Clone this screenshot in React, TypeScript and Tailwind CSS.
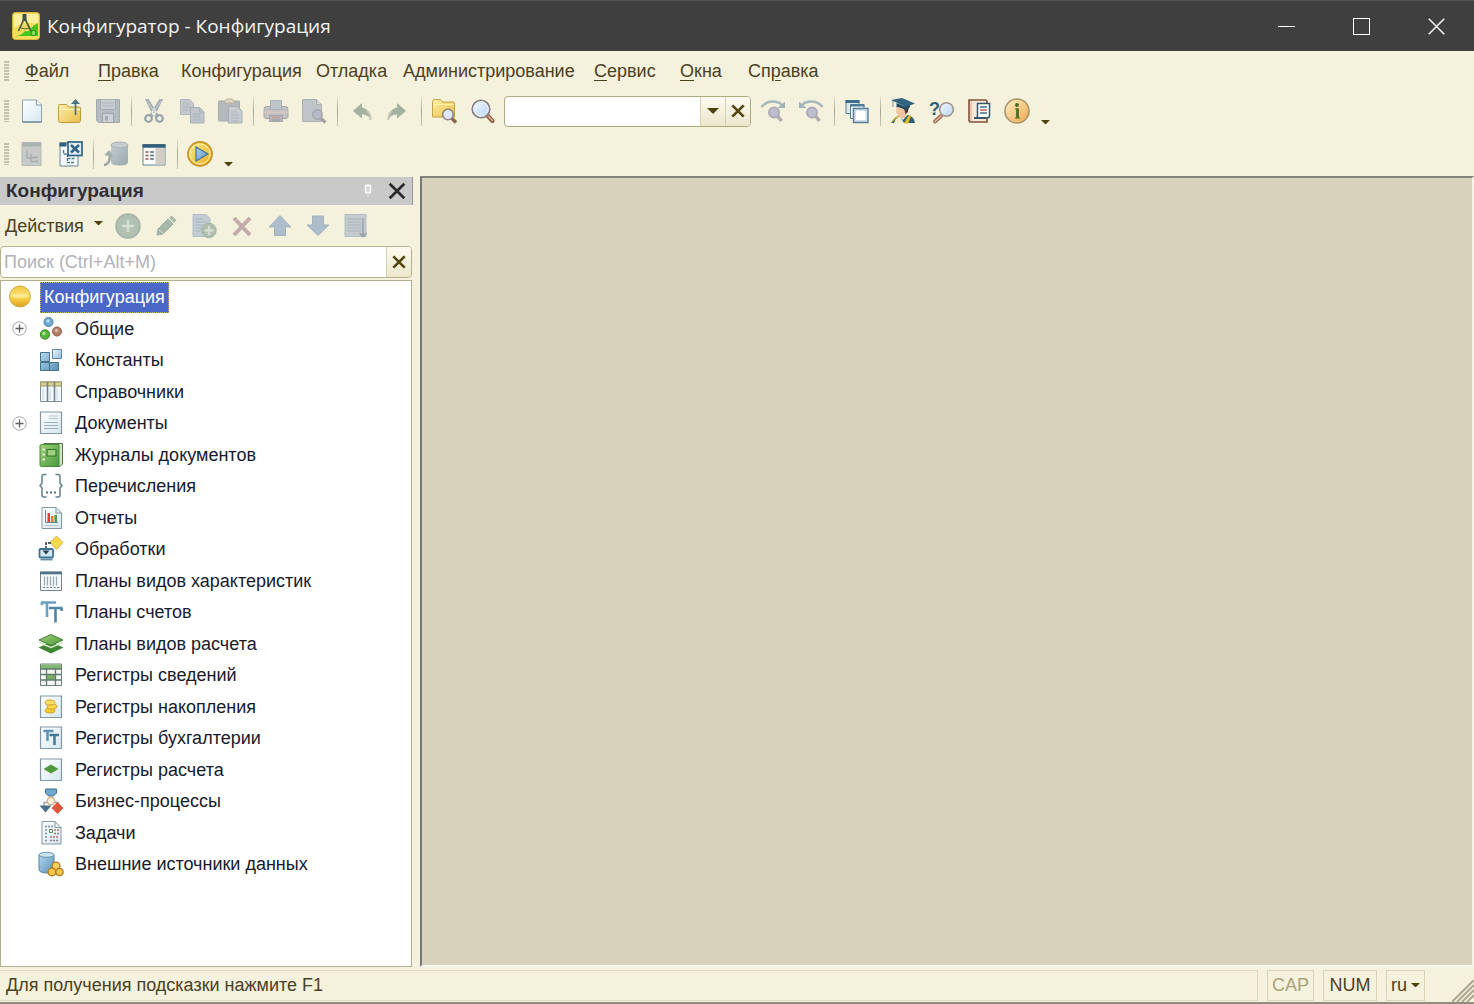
import React from 'react';

type IconProps = { children: React.ReactNode; className?: string };

const Icon = ({ children, className = 'size-[26px]' }: IconProps) => (
  <svg viewBox="0 0 26 26" className={`${className} shrink-0 overflow-visible`} fill="none" aria-hidden="true">
    {children}
  </svg>
);

const ICONS: Record<string, React.ReactNode> = {
  newFile: (
    <>
      <path d="M3.5 2h14l5 5v17h-19z" fill="url(#paper)" stroke="#8fa3ad" />
      <path d="M17.5 2v5h5" fill="#fff" stroke="#7f98a6" />
      <path d="M3.5 24h19" stroke="#6f8d9c" strokeWidth="1.4" />
    </>
  ),
  open: (
    <>
      <path d="M1.5 7.5q0-1 1-1h7l2 2.500h11q1 0 1 1v12.500q0 2-2 2h-18q-2 0-2-2z" fill="url(#folder)" stroke="#c29a3c" />
      <path d="M2 11.500h21" stroke="#fff3b8" />
      <path d="M18.500 17V3" stroke="#4b7080" strokeWidth="1.700" />
      <path d="M14 6l4.500-5L23 6z" fill="#4b7080" />
    </>
  ),
  save: (
    <>
      <path d="M1.500 1.500h23v23h-21l-2-2z" fill="#b5bbc0" stroke="#a0a9ae" />
      <path d="M5.500 1.500h15v10h-15z" fill="#c8cdcf" stroke="#a7adb1" />
      <path d="M7 5h12M7 8h12" stroke="#adb3b7" />
      <path d="M7.500 15.500h11v9h-11z" fill="#cfd2d2" stroke="#9ba3a9" />
      <path d="M10 18h3v4.500h-3z" fill="#a2abb1" />
    </>
  ),
  cut: (
    <>
      <path d="M4 1l3.500 0L17 16l-2 3-3-1.500zM22 1l-3.500 0L9 16l2 3 3-1.500z" fill="#a3aeb5" />
      <path d="M6 3l8 12M20 3l-8 12" stroke="#c0c9cd" strokeWidth="1.200" />
      <circle cx="7.500" cy="20.500" r="3.300" stroke="#98a4ac" strokeWidth="2.200" />
      <circle cx="18.500" cy="20.500" r="3.300" stroke="#98a4ac" strokeWidth="2.200" />
    </>
  ),
  copy: (
    <>
      <path d="M1.500 1.500h9l4 4v11h-13z" fill="#c3c8cc" stroke="#b0b7bc" />
      <path d="M3.500 6h7M3.500 9h8M3.500 12h8" stroke="#adb5ba" />
      <path d="M11.500 9.500h9l4.500 4.500v11H11.500z" fill="#c0c6cb" stroke="#a7b0b7" />
      <path d="M20.500 9.500V14H25M14 16h8M14 19h8M14 22h8" stroke="#a9b2b8" />
    </>
  ),
  paste: (
    <>
      <rect x="1.500" y="3" width="21" height="20" rx="1" fill="#b5b9bb" stroke="#a6abae" />
      <path d="M7.500 5V3l3-2h4l3 2v2z" fill="#ddd8c5" stroke="#b7ae9e" />
      <path d="M11.500 8.500h9l4.500 4.500v12H11.500z" fill="#c6cbd0" stroke="#a6afb6" />
      <path d="M14 14h6M14 17h8M14 20h8M14 23h8" stroke="#aab3b9" />
    </>
  ),
  print: (
    <>
      <path d="M3.500 8.500h19q2.500 0 2.500 3v7q0 2-2 2H3q-2 0-2-2v-7q0-3 2.500-3z" fill="#c3c0c0" stroke="#aaa8aa" />
      <path d="M7.500 2.500h11v9h-11z" fill="#bec6cc" stroke="#a8b1b8" />
      <path d="M1.500 14.500h23" stroke="#d1c9c8" strokeWidth="2" />
      <path d="M6.500 17.500h13v6h-13z" fill="#b9b9bd" stroke="#a4a5aa" />
      <path d="M9 19.500h8" stroke="#c79a96" strokeWidth="1.500" />
      <path d="M8.500 22h9" stroke="#8f949a" />
    </>
  ),
  preview: (
    <>
      <path d="M1.500 1.500h14l5 5v17h-19z" fill="#bfc4c9" stroke="#aab1b6" />
      <path d="M15.500 1.500v5h5" fill="#d3d6d8" stroke="#aab1b6" />
      <path d="M19 19.500l5.500 5" stroke="#a7a29f" strokeWidth="3.200" />
      <circle cx="16.500" cy="16.500" r="4.700" fill="#b5bbc6" stroke="#a2a7ae" strokeWidth="1.500" />
    </>
  ),
  undo: (
    <>
      <path d="M6 13l9-8v4.500q8 1 8.500 12-3-5.500-8.500-5v4z" fill="#a3b29f" />
      <path d="M20 13q4 3 3.500 9" stroke="#c3cabc" strokeWidth="2" />
    </>
  ),
  redo: (
    <>
      <path d="M21 13l-9-8v4.500q-8 1-8.500 12 3-5.500 8.500-5v4z" fill="#a3b29f" />
      <path d="M7 13q-4 3-3.500 9" stroke="#c3cabc" strokeWidth="2" />
    </>
  ),
  findFolder: (
    <>
      <path d="M1.500 3.500l1-2h7l2 2.500h11l1 1v14h-22z" fill="url(#folder)" stroke="#c8a140" />
      <path d="M2 6.500h21" stroke="#fff2b0" />
      <path d="M20 19.500l5 5" stroke="#8b654b" strokeWidth="3.400" />
      <circle cx="17" cy="16.500" r="5.300" fill="#dfe9fa" stroke="#8e8684" strokeWidth="1.600" />
    </>
  ),
  find: (
    <>
      <path d="M18.500 17.500l5 5.500" stroke="#8b5d48" strokeWidth="4.200" strokeLinecap="round" />
      <path d="M19 18l4.500 4.500" stroke="#d9ab86" strokeWidth="1.700" strokeLinecap="round" />
      <circle cx="12" cy="11" r="8.700" fill="url(#lens)" stroke="#877d88" strokeWidth="1.800" />
      <circle cx="12" cy="11" r="7.300" stroke="#f2f6ff" />
    </>
  ),
  findNext: (
    <>
      <path d="M1.500 9Q6 3.500 13 3.500q6 0 9.500 4" stroke="#a8b9bd" strokeWidth="2.600" />
      <path d="M25 3.500V10h-7.500z" fill="#9eb2b9" />
      <path d="M17.500 18l4 5" stroke="#b5acaf" strokeWidth="3.600" />
      <circle cx="14" cy="14.500" r="5" fill="#bfc0cf" stroke="#adabb9" strokeWidth="2" />
    </>
  ),
  findPrev: (
    <>
      <path d="M24.500 9Q20 3.500 13 3.500q-6 0-9.500 4" stroke="#a8b9bd" strokeWidth="2.600" />
      <path d="M1 3.500V10h7.500z" fill="#9eb2b9" />
      <path d="M17.500 18l4 5" stroke="#b5acaf" strokeWidth="3.600" />
      <circle cx="14" cy="14.500" r="5" fill="#bfc0cf" stroke="#adabb9" strokeWidth="2" />
    </>
  ),
  windows: (
    <>
      <path d="M2 2.500h13v13H2z" fill="#dce8ee" stroke="#587e93" />
      <path d="M1.500 3.500h14" stroke="#3f6f88" strokeWidth="3" />
      <path d="M6.500 6.500h13.500v14H6.500z" fill="#eef5fa" stroke="#587e93" />
      <path d="M6 7.500h14.500" stroke="#4a7a93" strokeWidth="2" />
      <path d="M9.500 10.500h14.500v14H9.500z" fill="#cfe1ec" stroke="#587e93" strokeWidth="1.400" />
      <path d="M12 13h9.500v9H12z" fill="#fff" />
    </>
  ),
  student: (
    <>
      <path d="M7 8h10l1 5-3 7H9.500L6 14z" fill="#f3c3a1" />
      <path d="M14 9l5-1-1 6-2.500 2-1-4z" fill="#54352b" />
      <path d="M1 25q3-6 8-7l4 4 4.500-5Q24 18 25 25z" fill="#2d5f75" />
      <path d="M4 25q2-6 6-6.500L14 25z" fill="#f5ecce" />
      <path d="M1 25q4-6 8-7M14.500 25L19 17.500l1.500 .7L18 25z" fill="#e3c32b" stroke="#d2b220" />
      <path d="M1 2L12 0l13 5.500L16 9z" fill="#2e6480" />
      <path d="M6.500 5v4q5 0 9 3.500L20 9V7l-4 2z" fill="#214a60" />
      <path d="M3 3v6" stroke="#7d8d92" />
    </>
  ),
  help: (
    <>
      <text x="1" y="17" fontFamily="Liberation Sans, sans-serif" fontWeight="700" fontSize="18" fill="#2e5f78">?</text>
      <path d="M13 18l-6 5.500" stroke="#9b6c5c" strokeWidth="4" strokeLinecap="round" />
      <path d="M13 18l-6 5.500" stroke="#e0b59a" strokeWidth="1.500" strokeLinecap="round" />
      <circle cx="18.500" cy="11.500" r="6.800" fill="url(#lens)" stroke="#a5938f" strokeWidth="1.600" />
    </>
  ),
  script: (
    <>
      <path d="M3 2h16q2 0 2 2v20H5q-2 0-2-2z" fill="#f9e8d8" stroke="#83503c" strokeWidth="1.600" />
      <path d="M5 3v20" stroke="#d9a98b" />
      <path d="M11.500 5.500h12v12q0 2.500-2.500 2.500H9q3 0 2.500-3z" fill="#fff" stroke="#34576d" strokeWidth="1.500" />
      <path d="M14 9h7M14 15h7" stroke="#426f87" strokeWidth="1.400" />
      <path d="M14 12h7" stroke="#b5563f" strokeWidth="1.400" />
      <path d="M8 20h12" stroke="#34576d" strokeWidth="2" />
    </>
  ),
  info: (
    <>
      <circle cx="13" cy="13" r="12" fill="url(#amber)" stroke="#a9946b" strokeWidth="1.600" />
      <circle cx="13" cy="7" r="2" fill="#4d6a25" />
      <path d="M13.500 10.500v9.500" stroke="#4d6a25" strokeWidth="2.800" />
      <path d="M11 11h3M11 20h5" stroke="#4d6a25" strokeWidth="1" />
    </>
  ),
  treeOff: (
    <>
      <path d="M3 1.500h19v23H3z" fill="#c7c9c8" stroke="#b6b9b9" />
      <path d="M3 3.500h19" stroke="#adb2b3" strokeWidth="4" />
      <path d="M8 10v7h4M12 13v7.500M12 16.500h7M12 20.500h7" stroke="#a6abad" strokeWidth="1.300" />
    </>
  ),
  treeClose: (
    <>
      <path d="M3 2h18v23H3z" fill="#f4f8fa" stroke="#66889a" />
      <path d="M2.500 3.500h7" stroke="#2e5e7c" strokeWidth="4" />
      <path d="M6.500 9v4h4M10.500 13v8.500h7M10.500 17.500h7" stroke="#55798c" strokeWidth="1.400" strokeDasharray="3 1" />
      <rect x="11" y="1" width="14" height="13.500" fill="#e3eef6" stroke="#2f6283" strokeWidth="1.700" />
      <path d="M14 4l8 7.500M22 4l-8 7.500" stroke="#2f6283" strokeWidth="2.600" />
    </>
  ),
  database: (
    <>
      <path d="M8 4v17q0 3.500 8.500 3.500T25 21V4z" fill="url(#cylOff)" />
      <ellipse cx="16.500" cy="4" rx="8.500" ry="3" fill="#c5cdd0" stroke="#a7b1b6" />
      <path d="M1 24q7-1 5.500-12" stroke="#9ba6a5" strokeWidth="2.400" />
      <path d="M1 14l5.500-5 4 7z" fill="#a4afad" />
    </>
  ),
  props: (
    <>
      <path d="M2 3.500h22v20.500H2z" fill="#fafafa" stroke="#6a8492" />
      <path d="M1.500 5h23" stroke="#315f7a" strokeWidth="3.500" />
      <path d="M14.500 7h9v16.500h-9z" fill="#d2cdc2" />
      <path d="M4.500 11h3M4.500 14.500h3M4.500 18h3" stroke="#a4544a" strokeWidth="1.300" />
      <path d="M9 11h4M9 14.500h4M9 18h4" stroke="#61727c" strokeWidth="1.300" />
    </>
  ),
  run: (
    <>
      <circle cx="13" cy="13" r="12" fill="url(#gold)" stroke="#c9962a" strokeWidth="1.800" />
      <circle cx="13" cy="13" r="10" stroke="#fdf0a8" />
      <path d="M9 6l12 7-12 7z" fill="url(#blue)" stroke="#3f719f" strokeWidth="1.200" />
    </>
  ),
  add: (
    <>
      <circle cx="13" cy="13" r="12" fill="#b1c0b0" stroke="#a2b3a3" strokeWidth="1.500" />
      <path d="M13 7v12M7 13h12" stroke="#d7dfd2" strokeWidth="2.600" />
    </>
  ),
  edit: (
    <>
      <path d="M4 22l1-6L15 6l5 5L10 21z" fill="#a7b8a8" stroke="#9bad9d" />
      <path d="M16 5l2.500-2.500 5 4.500-2.500 3z" fill="#a9baa9" />
      <path d="M6 17l4.500 3.500" stroke="#d5ddcf" />
    </>
  ),
  addCopy: (
    <>
      <path d="M2 1.500h13l4 4v18H2z" fill="#c2ccd2" stroke="#b1bec6" />
      <path d="M4 6h9M4 9h12M4 12h12M4 15h8M4 18h6" stroke="#aab9c2" />
      <circle cx="18" cy="17.500" r="7.200" fill="#aebfae" stroke="#a0b2a0" />
      <path d="M18 13v9M13.500 17.500h9" stroke="#d5ddcf" strokeWidth="2.400" />
    </>
  ),
  remove: <path d="M5 5l16 17M21 5L5 22" stroke="#c4aaa9" strokeWidth="4" />,
  up: <path d="M13 2.500L24 14h-5.500v8.500h-11V14H2z" fill="#aebdca" stroke="#a2b2bf" />,
  down: <path d="M13 22.500L2 12h5.500V3h11v9H24z" fill="#aebdca" stroke="#a2b2bf" />,
  sort: (
    <>
      <path d="M2 1.500h21v22H2z" fill="#c5cbcf" stroke="#b4bcc2" />
      <path d="M4 6h14M4 9h14M4 12h14M4 15h14M4 18h14" stroke="#a9b3bc" />
      <path d="M20 5v18M16.500 20l3.500 3.500 3.500-3.500" stroke="#95a2ae" strokeWidth="1.600" />
    </>
  ),
  // tree icons
  common: (
    <>
      <circle cx="10.500" cy="6" r="4.500" fill="#6fa9d6" stroke="#4e7ea6" />
      <circle cx="7" cy="18.500" r="4.700" fill="#58b53c" stroke="#3c8a29" />
      <circle cx="19" cy="15.500" r="4.500" fill="#b37f68" stroke="#8a5c48" />
      <circle cx="10" cy="5" r="1.700" fill="#bcdcf2" />
      <circle cx="6" cy="17.500" r="1.700" fill="#b0e795" />
      <circle cx="18.500" cy="14.500" r="1.700" fill="#ddb9a7" />
    </>
  ),
  constants: (
    <>
      <path d="M2.500 5.500h9v9h-9zM2.500 15.500h9v8h-9zM11.500 15.500h9v8h-9z" fill="url(#blue)" stroke="#44708c" />
      <path d="M14.500 2.500h9v9h-9z" fill="url(#sky)" stroke="#5a86a1" />
    </>
  ),
  catalogs: (
    <>
      <path d="M2.500 3h21v19.500h-21z" fill="#f4f8fb" stroke="#7d8f98" />
      <path d="M2.500 3h21v4h-21z" fill="#d9d08b" stroke="#9b9668" />
      <path d="M9.500 3v19.500M16.500 3v19.500" stroke="#71838e" strokeWidth="1.600" />
      <path d="M5 9v12M12 9v12M19 9v12" stroke="#dbe8f0" strokeWidth="2" />
    </>
  ),
  documents: (
    <>
      <path d="M2.500 2h21v21.500h-21z" fill="url(#paper)" stroke="#8597a0" strokeWidth="1.200" />
      <path d="M11 6h9M11 8.500h9" stroke="#b5c3cb" />
      <path d="M6 12.500h14M6 15.500h14M6 18.500h14" stroke="#98afbc" />
    </>
  ),
  journals: (
    <>
      <path d="M6 1.500h18.500v20.500l-2.500 2.500H6z" fill="#cfe3c6" stroke="#4c7b43" />
      <path d="M2 4q0-1.500 1.500-1.500h17.500v22H3.500Q2 24.500 2 23z" fill="url(#green)" stroke="#4b8a3c" />
      <path d="M9 7.500h9v6.500H9z" fill="#9fd07e" stroke="#2f7a29" strokeWidth="1.200" />
      <path d="M4.500 7.500h2.500M4.500 12.500h2.500M4.500 17.500h2.500" stroke="#e3f5d9" strokeWidth="2" />
    </>
  ),
  enums: (
    <>
      <path d="M8.500 1.500H6q-2 0-2 2v6.500L2 12.500l2 2.500v7q0 2 2 2h2.500M17.500 1.500H20q2 0 2 2v6.500l2 2.500-2 2.500v7q0 2-2 2h-2.500" stroke="#64808f" strokeWidth="1.500" />
      <path d="M8 19.500h2M12 19.500h2M16 19.500h2" stroke="#54717f" strokeWidth="2" />
    </>
  ),
  reports: (
    <>
      <path d="M4 2.500h14l5.500 5.500v15.500H4z" fill="url(#paper)" stroke="#8497a1" />
      <path d="M18 2.500V8h5.500" stroke="#8497a1" />
      <path d="M7.500 5v12.500H20" stroke="#71838c" />
      <path d="M9.500 8h2.500v9h-2.500z" fill="#d7433c" />
      <path d="M13 11h2.500v6H13z" fill="#e27a35" />
      <path d="M16.500 10h2.500v7h-2.500z" fill="#4b9b43" />
      <path d="M6.500 20.500h14" stroke="#b9c9d2" />
    </>
  ),
  processing: (
    <>
      <path d="M18.500 0L25 6.500l-6.500 7-6.500-7z" fill="#f4d94d" stroke="#cdb45c" />
      <path d="M13 7H8v6" stroke="#26343c" strokeWidth="1.500" strokeDasharray="3 1" />
      <rect x="1.500" y="13" width="13.500" height="8.500" rx="1" fill="#d5e7f2" stroke="#3f7291" strokeWidth="1.800" />
      <path d="M4.500 14.500h7L8 18.500z" fill="#223e50" />
      <path d="M2.500 23.500h12" stroke="#5f8ca7" strokeWidth="1.800" />
    </>
  ),
  charTypes: (
    <>
      <path d="M2.500 4h21v18.500h-21z" fill="#f5f8fa" stroke="#73848e" />
      <path d="M2 5h22" stroke="#4d7389" strokeWidth="2.600" />
      <path d="M6.500 8.500v9M9.500 8.500v9M12.500 8.500v9M15.500 8.500v9M18.500 8.500v9" stroke="#9aa8b0" strokeWidth="1.200" />
      <path d="M5 19.500h16" stroke="#617681" strokeDasharray="2 1.500" />
    </>
  ),
  accounts: (
    <>
      <path d="M3 3.500h15M9 3.500v14.500M4 3v3" stroke="#6aa0c4" strokeWidth="2.600" />
      <path d="M11 9h13.500M17.500 9v14.500M23.500 9v3" stroke="#4f84a6" strokeWidth="2.600" />
    </>
  ),
  calcTypes: (
    <>
      <path d="M13 11l12.500 5.500L13 22.500.5 16.500z" fill="#3f8534" />
      <path d="M1 11.500l12 5 12-5" stroke="#d7eec4" strokeWidth="1.500" />
      <path d="M13 3.500L25 9l-12 5.500L1 9z" fill="url(#green)" stroke="#3f7f31" />
    </>
  ),
  infoReg: (
    <>
      <path d="M2.500 2h21v21.500h-21z" fill="#f4f7f6" stroke="#6d8177" />
      <path d="M3 2.500h20v4.500H3z" fill="#84b674" />
      <path d="M9 12.500h8.500v5.500H9z" fill="#77b163" />
      <path d="M8.500 6v17.500M17.500 6v17.500M2.500 7h21M2.500 12.500h21M2.500 18h21" stroke="#62796f" strokeWidth="1.300" />
    </>
  ),
  accumReg: (
    <>
      <path d="M2.500 2h21v21.500h-21z" fill="url(#paper)" stroke="#8297a4" strokeWidth="1.200" />
      <ellipse cx="12" cy="16.500" rx="5" ry="2.500" fill="#f5c933" stroke="#d3a22c" />
      <ellipse cx="14" cy="12.500" rx="5" ry="2.500" fill="#f9d64b" stroke="#d3a22c" />
      <ellipse cx="12" cy="8.500" rx="5" ry="2.500" fill="#fbdf63" stroke="#d3a22c" />
    </>
  ),
  accountReg: (
    <>
      <path d="M2.500 2h21v21.500h-21z" fill="url(#paper)" stroke="#8297a4" strokeWidth="1.200" />
      <path d="M5.500 6h10M9.500 6v10" stroke="#5b92b5" strokeWidth="2.500" />
      <path d="M11.500 10h9.500M16.500 10v10" stroke="#457898" strokeWidth="2.500" />
    </>
  ),
  calcReg: (
    <>
      <path d="M2.500 2h21v21.500h-21z" fill="url(#paper)" stroke="#8297a4" strokeWidth="1.200" />
      <path d="M13 7.500l7.500 4.500-7.500 4.500L5.500 12z" fill="#4f9a3b" />
    </>
  ),
  business: (
    <>
      <path d="M7.500 1h11v4l-3 3h-5l-3-3z" fill="#6ea7cf" stroke="#3f708f" />
      <circle cx="13" cy="13" r="3.700" fill="#fff2db" stroke="#d6b18b" strokeWidth="1.500" />
      <path d="M6 18v-3.500h3M17 14.500h3v3" stroke="#93aab5" strokeWidth="1.500" />
      <path d="M1.500 17.500h12l-6 7z" fill="#4a6f86" />
      <path d="M19.500 14l6 6-6 6-6-6z" fill="#df573a" />
    </>
  ),
  tasks: (
    <>
      <path d="M4 1.500h13l6 6v16.500H4z" fill="url(#paper)" stroke="#8297a4" />
      <path d="M17 1.500v6h6" stroke="#8297a4" />
      <path d="M7 6.500h8M7 10h3M7 13.500h3M7 17h3M7 20.500h3" stroke="#77909f" strokeWidth="1.500" strokeDasharray="2 1" />
      <path d="M11.500 9.500h3v3h-3z" stroke="#5e8b5d" />
      <path d="M16 10h5M12 17h9" stroke="#b86d69" strokeWidth="1.700" strokeDasharray="2 1" />
      <path d="M12 20.500h9M16 13.500h5" stroke="#8b7d84" strokeWidth="1.700" strokeDasharray="2 1" />
    </>
  ),
  external: (
    <>
      <path d="M1 4v14.500q0 3 7 3.500t8-3.500V4z" fill="url(#blue)" stroke="#58859f" />
      <ellipse cx="8.500" cy="3.800" rx="7.500" ry="2.500" fill="#cde2ee" stroke="#6592aa" />
      <circle cx="18" cy="15" r="3.900" fill="#f5ce5b" stroke="#ab7b25" strokeWidth="1.300" />
      <circle cx="14" cy="21" r="3.900" fill="#f3c64a" stroke="#ab7b25" strokeWidth="1.300" />
      <circle cx="21.500" cy="21" r="3.700" fill="#f3c64a" stroke="#ab7b25" strokeWidth="1.300" />
    </>
  ),
  root: (
    <>
      <circle cx="13" cy="12.500" r="10.500" fill="url(#ball)" stroke="#cdab48" />
      <ellipse cx="13" cy="12" rx="8" ry="2" fill="#fff6b8" opacity=".5" />
    </>
  ),
};

const Gradient = ({ id, from, to }: { id: string; from: string; to: string }) => (
  <linearGradient id={id} x1="0" y1="0" x2="1" y2="1">
    <stop stopColor={from} />
    <stop offset="1" stopColor={to} />
  </linearGradient>
);

const Defs = () => (
  <svg className="absolute size-0" aria-hidden="true">
    <defs>
      <Gradient id="paper" from="#ffffff" to="#d5e7f0" />
      <Gradient id="folder" from="#fdf0a5" to="#e9bd4c" />
      <Gradient id="lens" from="#f2f8ff" to="#b9d5f2" />
      <Gradient id="amber" from="#fff0c4" to="#eda64c" />
      <Gradient id="gold" from="#fdf08c" to="#e8a91e" />
      <Gradient id="blue" from="#b4d8ee" to="#5890b6" />
      <Gradient id="sky" from="#f0f8fd" to="#8fbbda" />
      <Gradient id="green" from="#a3d07d" to="#47993a" />
      <Gradient id="cylOff" from="#c3ccd0" to="#99a7ae" />
      <linearGradient id="ball" x1="0" y1="0" x2="0" y2="1">
        <stop stopColor="#f3c63c" />
        <stop offset=".45" stopColor="#fbe277" />
        <stop offset=".6" stopColor="#f6cf45" />
        <stop offset="1" stopColor="#dc9f1c" />
      </linearGradient>
    </defs>
  </svg>
);

const ToolButton = ({ icon, label, disabled }: { icon: string; label: string; disabled?: boolean }) => (
  <button type="button" aria-label={label} disabled={disabled} className="flex h-8 w-[38px] shrink-0 items-center justify-center">
    <Icon>{ICONS[icon]}</Icon>
  </button>
);

const Separator = () => (
  <div className="flex w-2 shrink-0 justify-center">
    <div className="h-[30px] w-px bg-linear-to-b from-[#e6e3cd] via-[#a9a791] to-[#c9c7b0]" />
  </div>
);

const Grip = ({ className }: { className: string }) => (
  <div className={`${className} mx-1 w-[5px] shrink-0 bg-[repeating-linear-gradient(to_bottom,#c5c2ab_0_2px,#f4f1dc_2px_3px)]`} />
);

const Caret = ({ className = 'w-3' }: { className?: string }) => (
  <svg viewBox="0 0 12 6" className={`${className} shrink-0`} aria-hidden="true">
    <path d="M0 0h12L6 6z" fill="#4f420e" />
  </svg>
);

const Cross = ({ className, color, width = 3 }: { className: string; color: string; width?: number }) => (
  <svg viewBox="0 0 16 16" className={className} aria-hidden="true">
    <path d="M1.500 1.500l13 13M14.500 1.500l-13 13" stroke={color} strokeWidth={width} />
  </svg>
);

const MENU = [
  { pre: '', key: 'Ф', rest: 'айл', slot: 'w-[73px]' },
  { pre: '', key: 'П', rest: 'равка', slot: 'w-[83px]' },
  { pre: 'Конфигурация', key: '', rest: '', slot: 'w-[135px]' },
  { pre: 'Отладка', key: '', rest: '', slot: 'w-[87px]' },
  { pre: 'Администрирование', key: '', rest: '', slot: 'w-[191px]' },
  { pre: '', key: 'С', rest: 'ервис', slot: 'w-[86px]' },
  { pre: '', key: 'О', rest: 'кна', slot: 'w-[68px]' },
  { pre: 'Сп', key: 'р', rest: 'авка', slot: 'w-[80px]' },
];

const PANEL_TOOLS = [
  { icon: 'add', label: 'Добавить' },
  { icon: 'edit', label: 'Изменить' },
  { icon: 'addCopy', label: 'Добавить копированием' },
  { icon: 'remove', label: 'Удалить' },
  { icon: 'up', label: 'Переместить вверх' },
  { icon: 'down', label: 'Переместить вниз' },
  { icon: 'sort', label: 'Упорядочить' },
];

const TREE = [
  { icon: 'common', label: 'Общие', expandable: true },
  { icon: 'constants', label: 'Константы' },
  { icon: 'catalogs', label: 'Справочники' },
  { icon: 'documents', label: 'Документы', expandable: true },
  { icon: 'journals', label: 'Журналы документов' },
  { icon: 'enums', label: 'Перечисления' },
  { icon: 'reports', label: 'Отчеты' },
  { icon: 'processing', label: 'Обработки' },
  { icon: 'charTypes', label: 'Планы видов характеристик' },
  { icon: 'accounts', label: 'Планы счетов' },
  { icon: 'calcTypes', label: 'Планы видов расчета' },
  { icon: 'infoReg', label: 'Регистры сведений' },
  { icon: 'accumReg', label: 'Регистры накопления' },
  { icon: 'accountReg', label: 'Регистры бухгалтерии' },
  { icon: 'calcReg', label: 'Регистры расчета' },
  { icon: 'business', label: 'Бизнес-процессы' },
  { icon: 'tasks', label: 'Задачи' },
  { icon: 'external', label: 'Внешние источники данных' },
];

const TitleBar = () => (
  <header className="flex h-[51px] shrink-0 items-center border-t border-[#555] bg-[#3f3f3f] pl-3 text-[#f4f4f4]">
    <svg viewBox="0 0 28 28" className="size-7 shrink-0" aria-hidden="true">
      <rect x=".5" y=".5" width="27" height="27" rx="3" fill="#f4dc5c" stroke="#d9b93b" />
      <path d="M2 2h24v10Q12 8 2 16z" fill="#fbf0a0" />
      <path d="M5 24q5-1 8-5 4 1 6-2 1-3 7-6v13z" fill="#46c51f" />
      <path d="M12 7L6.500 19M13 7l6 12" stroke="#55603a" strokeWidth="1.800" fill="none" />
      <path d="M10.500 2h4v7h-4z" fill="#3e5047" />
      <path d="M9 16q4 2 8 0" stroke="#55603a" fill="none" />
      <circle cx="21.500" cy="21" r="2.500" fill="#86e35b" stroke="#258a17" />
    </svg>
    <h1 className="ml-[7px] font-['Open_Sans','Noto_Sans',sans-serif] text-[19px] leading-7">Конфигуратор - Конфигурация</h1>
    <div className="ml-auto flex h-full">
      <button type="button" aria-label="Свернуть" className="flex w-[75px] items-center justify-center">
        <span className="h-px w-[17px] bg-white" />
      </button>
      <button type="button" aria-label="Развернуть" className="flex w-[75px] items-center justify-center">
        <span className="size-[17px] border border-white" />
      </button>
      <button type="button" aria-label="Закрыть" className="flex w-[75px] items-center justify-center">
        <Cross className="size-[19px]" color="#eee" width={1.4} />
      </button>
    </div>
  </header>
);

const MenuBar = () => (
  <nav className="flex h-10 items-center">
    <Grip className="h-5" />
    <div className="flex pl-3">
      {MENU.map((item) => (
        <button key={item.pre + item.key} type="button" className={`${item.slot} shrink-0 text-left whitespace-nowrap`}>
          {item.pre}
          <span className="underline underline-offset-3">{item.key}</span>
          {item.rest}
        </button>
      ))}
    </div>
  </nav>
);

const MainToolbar = () => (
  <div className="flex h-10 items-center">
    <Grip className="h-[22px]" />
    <ToolButton icon="newFile" label="Новый" />
    <ToolButton icon="open" label="Открыть" />
    <ToolButton icon="save" label="Сохранить" disabled />
    <Separator />
    <ToolButton icon="cut" label="Вырезать" disabled />
    <ToolButton icon="copy" label="Копировать" disabled />
    <ToolButton icon="paste" label="Вставить" disabled />
    <Separator />
    <ToolButton icon="print" label="Печать" disabled />
    <ToolButton icon="preview" label="Просмотр" disabled />
    <Separator />
    <ToolButton icon="undo" label="Отменить" disabled />
    <ToolButton icon="redo" label="Вернуть" disabled />
    <Separator />
    <ToolButton icon="findFolder" label="Глобальный поиск" />
    <ToolButton icon="find" label="Найти" />
    <div className="mx-[3px] flex h-[31px] w-[247px] shrink-0 overflow-hidden rounded-[4px] border border-[#aeab7f] bg-white">
      <input aria-label="Строка поиска" className="min-w-0 flex-1 px-1 outline-none" />
      <button type="button" aria-label="Список" className="flex w-[25px] items-center justify-center border-l border-[#d5d1b5] bg-linear-to-b from-[#fbfaf0] to-[#ece7cb]">
        <Caret />
      </button>
      <button type="button" aria-label="Очистить" className="flex w-[25px] items-center justify-center border-l border-[#d5d1b5] bg-linear-to-b from-[#fbfaf0] to-[#ece7cb]">
        <Cross className="size-[14px]" color="#54460f" />
      </button>
    </div>
    <ToolButton icon="findNext" label="Найти следующий" disabled />
    <ToolButton icon="findPrev" label="Найти предыдущий" disabled />
    <Separator />
    <ToolButton icon="windows" label="Окна" />
    <Separator />
    <ToolButton icon="student" label="Синтаксис-помощник" />
    <ToolButton icon="help" label="Поиск в справке" />
    <ToolButton icon="script" label="Шаблоны" />
    <ToolButton icon="info" label="О программе" />
    <button type="button" aria-label="Настройка панели" className="ml-px flex h-7 w-4 items-end justify-center pb-px">
      <Caret className="w-[9px]" />
    </button>
  </div>
);

const ConfigToolbar = () => (
  <div className="flex h-[45px] items-center">
    <Grip className="h-[22px]" />
    <ToolButton icon="treeOff" label="Открыть конфигурацию" disabled />
    <ToolButton icon="treeClose" label="Закрыть конфигурацию" />
    <Separator />
    <ToolButton icon="database" label="Обновить базу данных" disabled />
    <ToolButton icon="props" label="Окно конфигурации" />
    <Separator />
    <ToolButton icon="run" label="Начать отладку" />
    <button type="button" aria-label="Настройка панели" className="ml-px flex h-7 w-4 items-end justify-center pb-px">
      <Caret className="w-[9px]" />
    </button>
  </div>
);

const ConfigPanel = () => (
  <aside className="flex w-[413px] shrink-0 flex-col">
    <div className="mt-px flex h-7 items-center border-r border-[#999] bg-[#c9c9c9] pr-[6px] pb-px pl-[6px]">
      <h2 className="text-[19px] leading-6 font-bold text-[#2e2e33]">Конфигурация</h2>
      <button type="button" aria-label="Закрепить" className="ml-auto flex w-8 justify-center">
        <svg viewBox="0 0 8 14" className="h-[14px] w-2" aria-hidden="true">
          <rect x="1.500" y="1" width="5" height="8" rx="2" fill="#d8d8d8" stroke="#fff" strokeWidth="1.500" />
          <path d="M4 9v4" stroke="#ddd" />
        </svg>
      </button>
      <button type="button" aria-label="Закрыть панель" className="ml-1">
        <Cross className="size-[18px]" color="#2a2a2a" width={2.4} />
      </button>
    </div>
    <div className="flex h-[41px] items-center pl-[5px]">
      <button type="button" className="flex w-[104px] items-center justify-between pr-[6px]">
        Действия
        <Caret className="mb-1 w-[9px]" />
      </button>
      {PANEL_TOOLS.map((tool) => (
        <ToolButton key={tool.icon} icon={tool.icon} label={tool.label} disabled />
      ))}
    </div>
    <div className="mr-px flex h-8 shrink-0 overflow-hidden rounded-[4px] border border-[#b5b189] bg-white">
      <input
        aria-label="Поиск"
        placeholder="Поиск (Ctrl+Alt+M)"
        className="min-w-0 flex-1 pl-[3px] outline-none placeholder:text-[#b3b1b9]"
      />
      <button type="button" aria-label="Очистить поиск" className="flex w-[25px] items-center justify-center border-l border-[#d5d1b5] bg-linear-to-b from-[#fbfaf0] to-[#ece7cb]">
        <Cross className="size-[14px]" color="#54460f" />
      </button>
    </div>
    <ul className="mt-[2px] mr-px flex-1 overflow-hidden border border-[#b3ae8c] bg-white text-[#171a2b]">
      <li className="flex h-[32px] items-center pl-[6px]">
        <Icon>{ICONS.root}</Icon>
        <span className="ml-[7px] flex h-[31px] items-center border border-dotted border-[#c9b46a] bg-[#4a68c8] px-[3px] text-white">
          Конфигурация
        </span>
      </li>
      {TREE.map((node) => (
        <li key={node.icon} className="flex items-center pl-[11px] odd:h-[32px] even:h-[31px]">
          <span className="flex w-[26px] shrink-0">
            {node.expandable && (
              <button type="button" aria-label={`Развернуть: ${node.label}`}>
                <svg viewBox="0 0 15 15" className="size-[15px]" aria-hidden="true">
                  <circle cx="7.500" cy="7.500" r="6.700" fill="#fff" stroke="#a5a5a5" />
                  <path d="M7.500 3.500v8M3.500 7.500h8" stroke="#606060" strokeWidth="1.300" />
                </svg>
              </button>
            )}
          </span>
          <Icon>{ICONS[node.icon]}</Icon>
          <span className="ml-[11px] whitespace-nowrap">{node.label}</span>
        </li>
      ))}
    </ul>
  </aside>
);

const StatusBar = () => (
  <footer className="relative flex h-[37px] shrink-0 items-center gap-[9px] border-b-2 border-[#8f8d7e] pt-px pr-[49px]">
    <div className="flex h-[31px] flex-1 items-center border border-l-0 border-[#dedabd] pl-[6px]">Для получения подсказки нажмите F1</div>
    <div className="flex h-[31px] w-[47px] items-center justify-center border border-[#d8d4b7] text-[#aaa17d]">CAP</div>
    <div className="flex h-[31px] w-[54px] items-center justify-center border border-[#d8d4b7]">NUM</div>
    <button type="button" className="flex h-[31px] w-[39px] items-center justify-center gap-1 border border-[#d8d4b7]">
      ru
      <Caret className="w-[9px]" />
    </button>
    <svg viewBox="0 0 22 22" className="absolute right-0 bottom-0 size-[22px]" aria-hidden="true">
      <path d="M0 22L22 0M5 22L22 5M10 22l12-12M15 22l7-7" stroke="#aaa68b" strokeWidth="2" />
    </svg>
  </footer>
);

export default function App() {
  return (
    <div className="flex min-h-screen flex-col bg-[#f4f1dc] font-['Liberation_Sans',Arial,sans-serif] text-[18px] leading-6 text-[#4b401f]">
      <Defs />
      <TitleBar />
      <MenuBar />
      <MainToolbar />
      <ConfigToolbar />
      <div className="flex flex-1">
        <ConfigPanel />
        <main className="ml-[7px] flex-1 border-2 border-t-[#85837a] border-r-[#f6f4e6] border-b-[#fbfaf2] border-l-[#77767a] bg-[#d8d2bc]" />
      </div>
      <StatusBar />
    </div>
  );
}
